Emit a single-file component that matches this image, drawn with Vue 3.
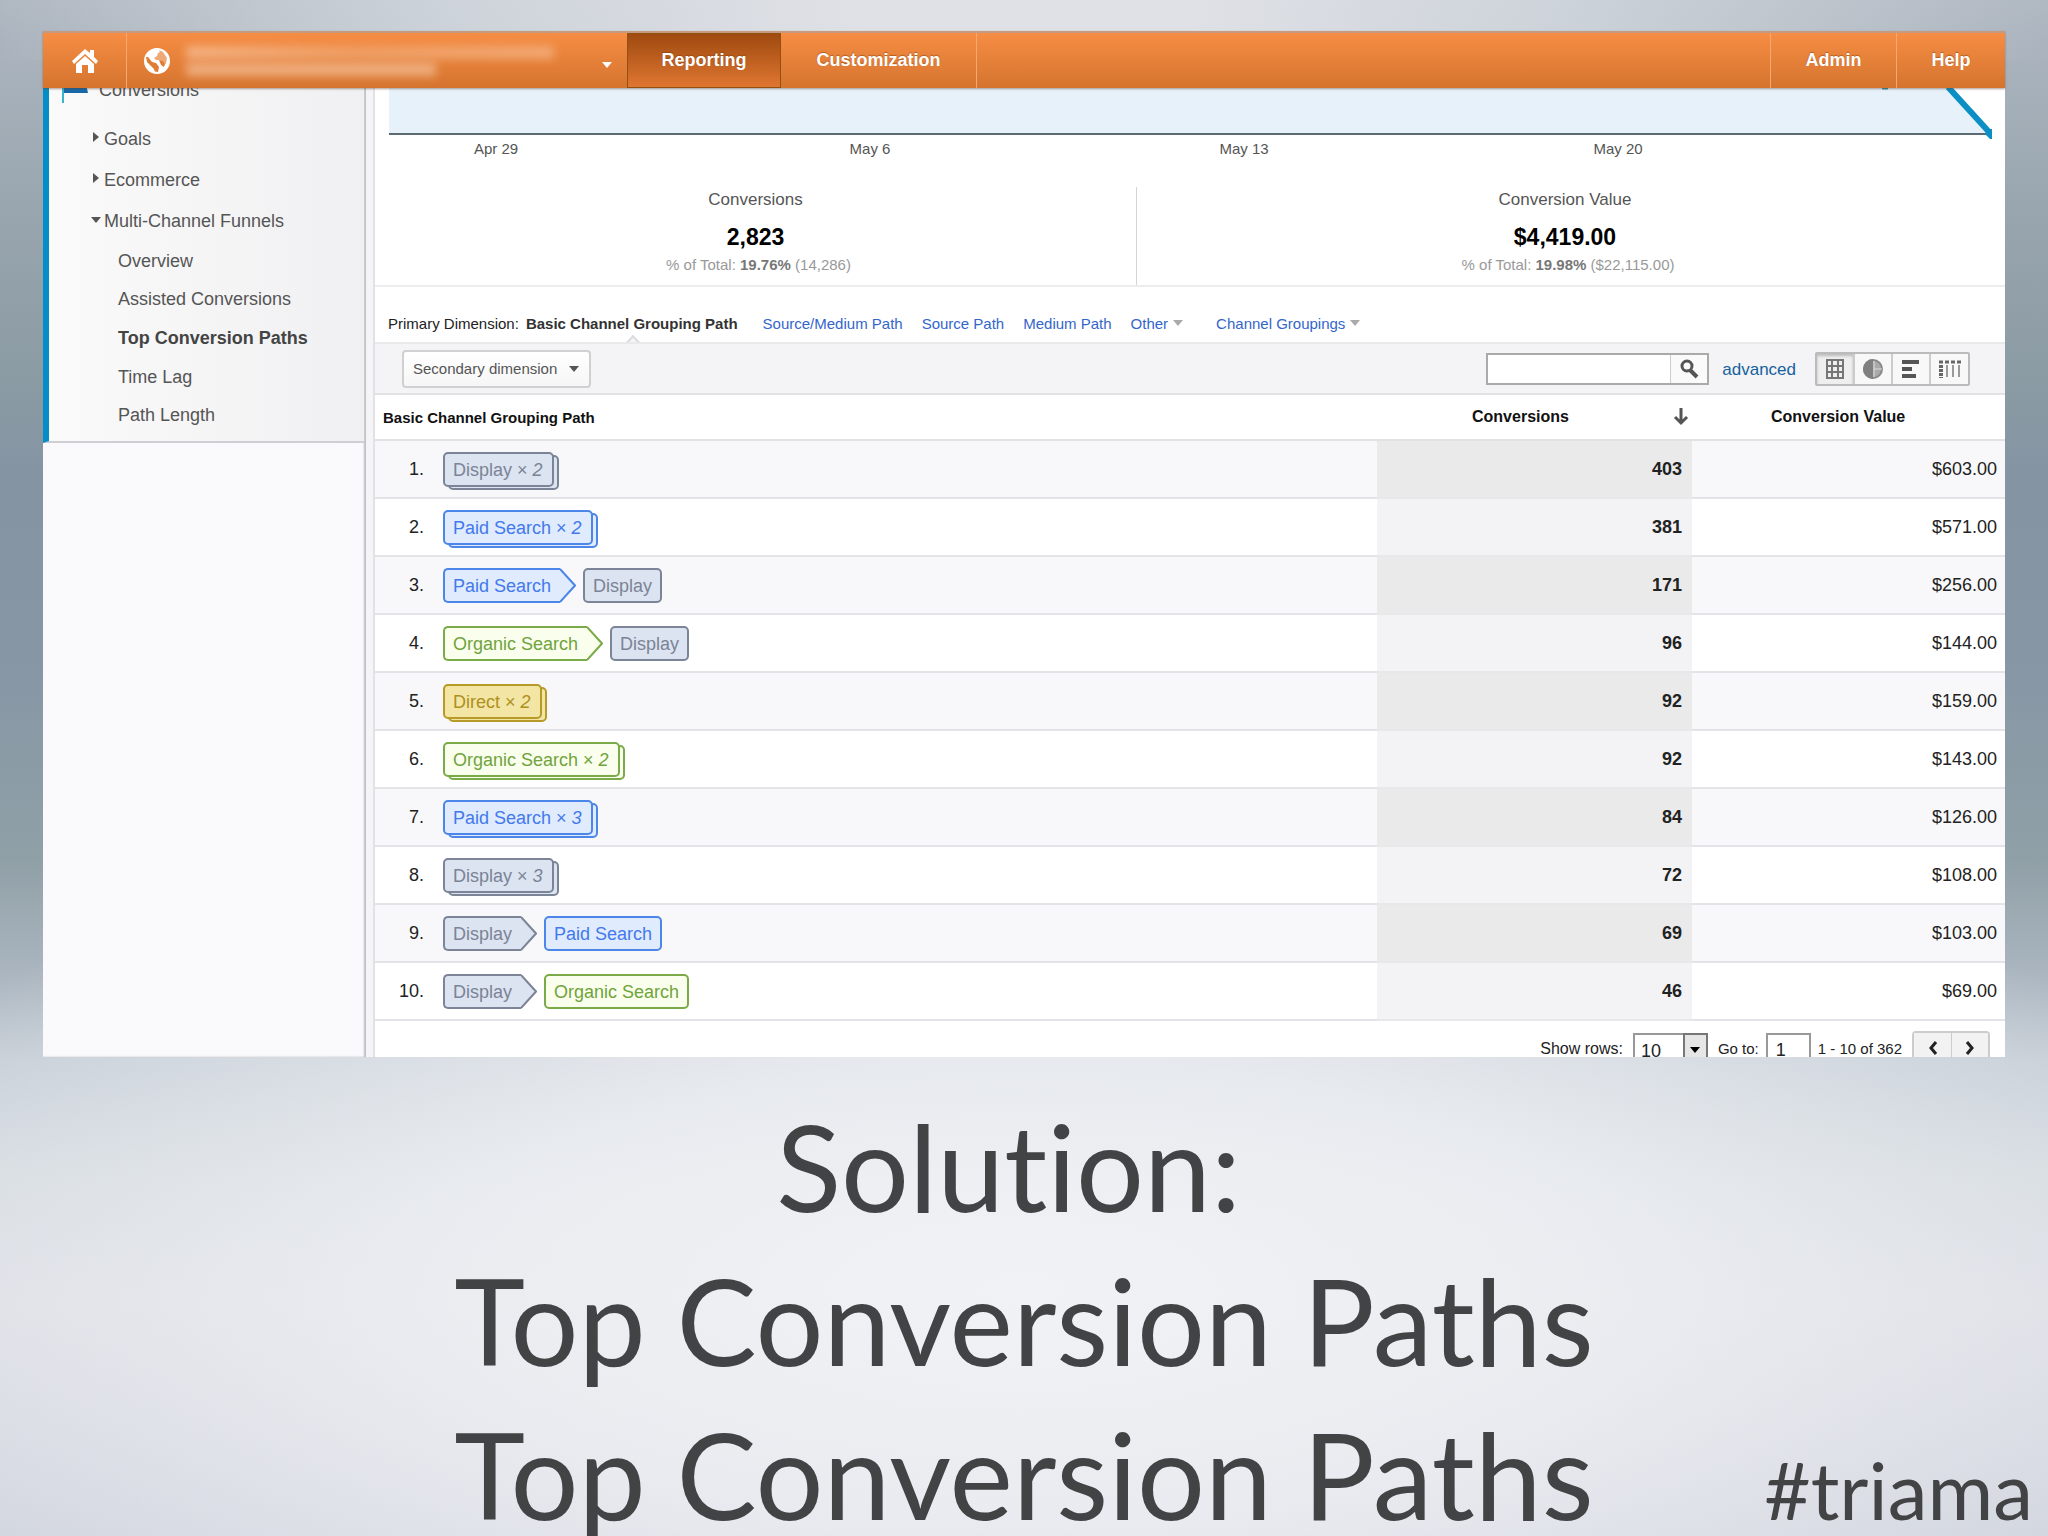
<script setup>
const subItems = ['Overview', 'Assisted Conversions', 'Top Conversion Paths', 'Time Lag', 'Path Length']
const dates = ['Apr 29', 'May 6', 'May 13', 'May 20']
const metrics = [
  { label: 'Conversions', value: '2,823', share: '19.76%', total: '(14,286)' },
  { label: 'Conversion Value', value: '$4,419.00', share: '19.98%', total: '($22,115.00)' }
]
const D = { name: 'Display', kind: 'display' }
const P = { name: 'Paid Search', kind: 'paid' }
const O = { name: 'Organic Search', kind: 'organic' }
const R = { name: 'Direct', kind: 'direct' }
const rows = [
  { path: [D], times: 2, count: 403, value: '$603.00' },
  { path: [P], times: 2, count: 381, value: '$571.00' },
  { path: [P, D], count: 171, value: '$256.00' },
  { path: [O, D], count: 96, value: '$144.00' },
  { path: [R], times: 2, count: 92, value: '$159.00' },
  { path: [O], times: 2, count: 92, value: '$143.00' },
  { path: [P], times: 3, count: 84, value: '$126.00' },
  { path: [D], times: 3, count: 72, value: '$108.00' },
  { path: [D, P], count: 69, value: '$103.00' },
  { path: [D, O], count: 46, value: '$69.00' }
]
</script>

<template>
  <main class="slide">
    <section class="panel">
      <header class="topbar">
        <a class="home" href="#" aria-label="Home">
          <svg width="26" height="24" viewBox="0 0 26 24" fill="#fff">
            <path d="M13 0L0 12l2 3L13 5l11 10 2-3-4-4V1h-4v3z" />
            <path d="M4 15l9-8 9 8v9h-6v-8h-6v8H4z" />
          </svg>
        </a>
        <button class="account" type="button" aria-label="Account">
          <svg width="26" height="26" viewBox="0 0 26 26">
            <circle cx="13" cy="13" r="13" fill="#fff" />
            <path d="M2 9l2 0 4 5 4 1 3 4-1 5c-3 0-4-1-4-3l-4-4-3-3z" fill="#e17c35" />
            <path d="M15 2l4 2 4 6-1 6-3-1-3-3h-4l-2-2 3-2 1-3 2-1z" fill="#efa878" />
            <path d="M15 12l4 1 2 3-1 3-3-2z" fill="#e17c35" />
          </svg>
          <span class="smudge"><i></i><i></i></span>
          <span class="tri white"></span>
        </button>
        <a class="tab active" href="#">Reporting</a>
        <a class="tab custom" href="#">Customization</a>
        <span class="spacer"></span>
        <a class="tab admin" href="#">Admin</a>
        <a class="tab help" href="#">Help</a>
      </header>

      <div class="body">
        <nav class="side">
          <div class="menu">
            <div class="section">
              <svg width="26" height="24" viewBox="0 0 26 24"><path d="M2 0h21l3 14H2z" fill="#1769aa" /><path d="M1 0v24" stroke="#35b5cf" stroke-width="2" /></svg>
              <span>Conversions</span>
            </div>
            <a class="group" href="#"><span class="right"></span>Goals</a>
            <a class="group" href="#"><span class="right"></span>Ecommerce</a>
            <a class="group" href="#"><span class="down"></span>Multi-Channel Funnels</a>
            <ul>
              <li v-for="s in subItems" :key="s"><a href="#" :class="{ current: s === 'Top Conversion Paths' }">{{ s }}</a></li>
            </ul>
          </div>
        </nav>

        <div class="content">
          <div class="chart">
            <svg class="plot" viewBox="0 0 1608 52" preserveAspectRatio="none">
              <path d="M0 0H1560L1601 46H0z" fill="#e7f1fa" />
              <path d="M0 46H1601" stroke="#5a6a70" stroke-width="2" />
              <path d="M1494 0h6" stroke="#2a93a8" stroke-width="3" />
              <path d="M1560 -1L1602 45" stroke="#0c8fc4" stroke-width="6" />
              <path d="M1599 41h5v10h-2l-5-5z" fill="#0c8fc4" />
            </svg>
            <div class="dates"><span v-for="d in dates" :key="d">{{ d }}</span></div>
          </div>

          <div class="metrics">
            <div v-for="m in metrics" :key="m.label" class="metric">
              <div class="label">{{ m.label }}</div>
              <div class="value">{{ m.value }}</div>
              <div class="total">% of Total: <b>{{ m.share }}</b> <span>{{ m.total }}</span></div>
            </div>
          </div>

          <div class="dimensions">
            <span class="primary">Primary Dimension:</span>
            <b class="chosen">Basic Channel Grouping Path</b>
            <a href="#">Source/Medium Path</a>
            <a href="#">Source Path</a>
            <a href="#">Medium Path</a>
            <a class="more" href="#">Other<span class="tri"></span></a>
            <a class="more" href="#">Channel Groupings<span class="tri"></span></a>
          </div>

          <div class="toolbar">
            <button class="secondary" type="button">Secondary dimension<span class="tri dark"></span></button>
            <span class="spacer"></span>
            <div class="search">
              <input type="text" aria-label="Search" />
              <button type="button" aria-label="Search">
                <svg width="20" height="20" viewBox="0 0 20 20" fill="none" stroke="#555"><circle cx="8" cy="7" r="5" stroke-width="3" /><path d="M11 11l7 7" stroke-width="4" /></svg>
              </button>
            </div>
            <a class="advanced" href="#">advanced</a>
            <div class="views">
              <button class="on" type="button" aria-label="Table">
                <svg width="18" height="20" viewBox="0 0 18 20" fill="none" stroke="#777" stroke-width="2"><path d="M1 1h16v18H1zM6 1v18M12 1v18M1 7h16M1 13h16" /></svg>
              </button>
              <button type="button" aria-label="Percentage">
                <svg width="20" height="20" viewBox="0 0 20 20"><circle cx="10" cy="10" r="9" fill="#aaa" stroke="#888" stroke-width="2" /><path d="M10 0A10 10 0 0 0 10 20z" fill="#808080" /><path d="M11 2v16M11 10h8" stroke="#ddd" stroke-width="1" /></svg>
              </button>
              <button type="button" aria-label="Performance">
                <svg width="20" height="20" viewBox="0 0 20 20" fill="#555"><path d="M1 1h17v4H1zM1 8h10v4H1zM1 15h14v4H1z" /></svg>
              </button>
              <button type="button" aria-label="Pivot">
                <svg width="22" height="20" viewBox="0 0 22 20" fill="none" stroke="#666"><path d="M0 3h22" stroke-width="3" stroke-dasharray="4 2" /><path d="M2 6v13" stroke-width="4" stroke-dasharray="3 1" /><path d="M8 6v12M14 6v12M20 6v12" stroke="#999" stroke-width="2" /></svg>
              </button>
            </div>
          </div>

          <table>
            <colgroup><col class="c-num" /><col /><col class="c-count" /><col class="c-value" /></colgroup>
            <thead>
              <tr>
                <th class="h-path" colspan="2">Basic Channel Grouping Path</th>
                <th><div class="sort">Conversions<svg width="16" height="18" viewBox="0 0 16 18" fill="none" stroke="#555" stroke-width="3"><path d="M8 0v15M2 9l6 6 6-6" /></svg></div></th>
                <th class="h-value">Conversion Value</th>
              </tr>
            </thead>
            <tbody>
              <tr v-for="(r, i) in rows" :key="i">
                <td class="num">{{ i + 1 }}.</td>
                <td>
                  <div class="path">
                    <span v-for="(p, j) in r.path" :key="j" class="tag" :class="[p.kind, { stack: r.times, arrow: j < r.path.length - 1 }]">
                      <span class="text">{{ p.name }}<template v-if="r.times"> × <em>{{ r.times }}</em></template></span>
                      <svg v-if="j < r.path.length - 1" class="tip" width="16" height="35" viewBox="0 0 16 35"><path d="M0 1L15 17.500L0 34" /></svg>
                    </span>
                  </div>
                </td>
                <td class="count">{{ r.count }}</td>
                <td class="money">{{ r.value }}</td>
              </tr>
            </tbody>
          </table>

          <footer class="pager">
            <label for="rows">Show rows:</label>
            <span class="pick"><select id="rows"><option>10</option></select><span class="knob"><span class="tri black"></span></span></span>
            <label class="small" for="page">Go to:</label>
            <input id="page" type="text" value="1" />
            <span class="small range">1 - 10 of 362</span>
            <div class="steps">
              <button type="button" aria-label="Previous"><svg width="10" height="14" viewBox="0 0 10 14" fill="none" stroke="#222" stroke-width="3"><path d="M8 1L3 7l5 6" /></svg></button>
              <button type="button" aria-label="Next"><svg width="10" height="14" viewBox="0 0 10 14" fill="none" stroke="#222" stroke-width="3"><path d="M2 1l5 6-5 6" /></svg></button>
            </div>
          </footer>
        </div>
      </div>
    </section>

    <h1>Solution:&nbsp;<br />Top Conversion Paths<br />Top Conversion Paths</h1>
    <p class="hashtag">#triama</p>
  </main>
</template>

<style>
body { background: #d9dce2; }
</style>

<style scoped>
* { box-sizing: border-box; }
.slide {
  position: relative;
  height: 100vh;
  overflow: hidden;
  padding: 31px 43px 0;
  font-family: "Liberation Sans", Arial, sans-serif;
  color: #222;
  background:
    radial-gradient(ellipse 62% 34% at 50% 84%, #f1f2f5 0%, rgba(238, 240, 244, 0.8) 45%, rgba(226, 228, 234, 0) 100%),
    linear-gradient(90deg, rgba(222, 225, 231, 0) 0%, rgba(218, 223, 228, 0.7) 22%, #dfe1e6 42%, #dfe1e6 58%, rgba(218, 223, 228, 0.7) 76%, rgba(222, 225, 231, 0) 100%) 0 0 / 100% 60px no-repeat,
    linear-gradient(180deg, #b0b8c2 0%, #98a5ae 14%, #8c9ca4 24%, #8494a3 31%, #8696a5 43%, #90a0a7 56%, #a9b4be 63%, #c6ced6 69%, #d5dbe0 77%, #dcdee5 85%, #d0d4dd 100%);
}
a { color: inherit; text-decoration: none; }
button, input, select { font: inherit; color: inherit; margin: 0; padding: 0; border-radius: 0; }
.spacer { flex: 1; }
.tri { width: 0; height: 0; border: 5px solid transparent; border-top: 6px solid #aaa; border-bottom: 0; }
.tri.white { border-top-color: #fff; }
.tri.dark { border-top-color: #555; }
.tri.black { border-top-color: #000; }

.topbar {
  position: relative;
  z-index: 1;
  display: flex;
  height: 57px;
  border-top: 2px solid #c49a80;
  background: linear-gradient(#f68d44, #d5742e);
  box-shadow: 0 1px 2px rgba(90, 60, 40, 0.5);
  color: #fff;
}
.home { width: 84px; display: flex; align-items: center; justify-content: center; border-right: 1px solid #f5a871; }
.account { width: 500px; display: flex; align-items: center; padding: 0 15px 0 17px; border: 0; background: none; }
.smudge { flex: 1; display: flex; flex-direction: column; gap: 4px; margin-left: 16px; }
.smudge i { width: 368px; height: 13px; background: linear-gradient(90deg, rgba(255, 224, 200, 0.5), rgba(255, 224, 200, 0.3) 45%, rgba(255, 224, 200, 0.4)); filter: blur(5px); }
.smudge i + i { width: 250px; background: rgba(255, 224, 200, 0.5); }
.account .tri { margin-top: 8px; }
.tab { display: flex; align-items: center; justify-content: center; font-size: 18px; font-weight: bold; text-shadow: 0 -1px 1px rgba(120, 60, 10, 0.5); }
.active { width: 154px; border: 1px solid #93500f; background: linear-gradient(#9f4a10, #df7631); }
.custom { width: 196px; border-right: 1px solid #f5a871; }
.admin { width: 126px; border-left: 1px solid #f5a871; }
.help { width: 109px; border-left: 1px solid #f5a871; }

.body { display: flex; background: #fff; }
.side {
  width: 332px;
  flex: none;
  overflow: hidden;
  background: #fafafc;
  border-right: 2px solid #e3e1e5;
  padding-right: 9px;
  box-shadow: inset -7px 0 #f5f4f7, inset -9px 0 2px #bdbdc2;
}
.menu {
  margin-top: -18px;
  border-left: 6px solid #058dc7;
  border-bottom: 2px solid #cfcfd3;
  background: linear-gradient(90deg, #fafafa, #f0f0f2);
  padding-bottom: 6px;
  font-size: 18px;
  color: #555;
}
.section { display: flex; align-items: center; gap: 11px; height: 49px; padding: 0 0 8px 13px; }
.group { display: flex; align-items: center; height: 41px; padding-left: 42px; }
.group span { width: 13px; }
.right::before, .down::before { content: ""; display: block; width: 0; height: 0; border: 5px solid transparent; }
.right::before { border-left: 6px solid #555; border-right: 0; margin: -6px 0 0 2px; }
.down::before { border-top: 6px solid #555; border-bottom: 0; margin-top: -4px; }
.menu ul { display: grid; grid-auto-rows: 1fr; align-items: center; height: 193px; margin: 0; padding: 0 0 0 69px; list-style: none; }
.current { font-weight: bold; color: #444; }

.content { flex: 1; min-width: 0; }
.chart { padding: 0 9px 0 14px; }
.plot { display: block; width: 100%; height: 52px; }
.dates { display: grid; grid-template-columns: repeat(4, 374px); margin-left: -80px; font-size: 15px; line-height: 18px; text-align: center; color: #555; }
.metrics { display: flex; margin-top: 29px; border-bottom: 2px solid #ececee; text-align: center; }
.metric { width: 762px; height: 98px; padding-top: 2px; border-right: 1px solid #d5d5d8; }
.metric + .metric { flex: 1; border: 0; padding-right: 12px; }
.label { font-size: 17px; line-height: 22px; color: #555; }
.value { font-size: 23px; line-height: 28px; margin-top: 12px; font-weight: bold; color: #000; }
.total { font-size: 15px; line-height: 20px; margin-top: 4px; padding-left: 6px; color: #999; }
.total b { color: #777; }

.dimensions { display: flex; align-items: center; height: 55px; padding: 17px 0 0 13px; font-size: 15px; gap: 19px; color: #3366cc; white-space: nowrap; }
.primary { color: #222; margin-right: -12px; }
.chosen { position: relative; margin-right: 6px; color: #333; }
.chosen::after { content: ""; position: absolute; left: 50%; top: 23px; width: 12px; height: 12px; margin-left: -6px; background: #f5f4f6; border: 2px solid #dcdce0; border-right: 0; border-bottom: 0; transform: rotate(45deg); }
.more { display: flex; align-items: center; gap: 5px; }
.more + .more { margin-left: 14px; }

.toolbar { position: relative; display: flex; align-items: center; height: 53px; padding: 0 35px 0 27px; background: #f4f3f5; border-top: 2px solid #e9e9ec; border-bottom: 2px solid #e2e2e5; }
.secondary { display: flex; align-items: center; justify-content: space-between; width: 189px; height: 38px; padding: 0 10px 0 9px; border: 2px solid #d0d0d3; border-radius: 4px; background: linear-gradient(#fff, #f6f6f6); font-size: 15px; color: #555; }
.search { display: flex; height: 32px; border: 2px solid #aaa; background: #fff; }
.search input { width: 182px; border: 0; }
.search button { width: 37px; border: 0; border-left: 1px solid #ccc; background: #fafafa; display: flex; align-items: center; justify-content: center; }
.advanced { margin: 2px 19px 0 13px; font-size: 17px; color: #15629e; }
.views { display: flex; height: 34px; border: 2px solid #bbb; border-radius: 2px; }
.views button { width: 38px; border: 0; border-right: 2px solid #ccc; background: #f8f8f8; display: flex; align-items: center; justify-content: center; }
.views button:last-child { border-right: 0; width: 37px; }
.views .on { background: #efefef; box-shadow: inset 0 2px 3px #bbb; }

table { width: 100%; table-layout: fixed; border-collapse: separate; border-spacing: 0; }
.c-num { width: 68px; }
.c-count { width: 315px; }
.c-value { width: 313px; }
th { height: 46px; padding: 0; border-bottom: 2px solid #e2e2e5; font-size: 16px; text-align: left; color: #111; }
.h-path { padding-left: 8px; font-size: 15px; }
.h-value { padding-left: 79px; }
.sort { display: flex; justify-content: space-between; align-items: center; padding: 0 3px 0 95px; }
td { height: 58px; padding: 0; border-bottom: 2px solid #e4e4e8; font-size: 18px; vertical-align: middle; }
tbody tr:nth-child(odd) td { background: #f8f8fa; }
tbody tr .count, tbody tr:nth-child(even) .count { background: #f3f3f5; font-weight: bold; border-bottom-color: #e8e8ea; }
tbody tr:nth-child(odd) .count { background: #eaeaeb; }
.num { text-align: right; padding-right: 19px; }
.count { text-align: right; padding-right: 10px; }
.money { text-align: right; padding-right: 8px; }

.path { display: flex; gap: 7px; }
.tag { position: relative; height: 35px; }
.text { display: block; position: relative; height: 35px; line-height: 32px; padding: 0 8px; border: 2px solid var(--line); border-radius: 5px; background: var(--fill); color: var(--ink); white-space: pre; }
.stack .text { padding-right: 9px; }
.stack::before { content: ""; position: absolute; left: 5px; top: 3px; right: -5px; bottom: -3px; border: 2px solid var(--line); border-radius: 5px; background: var(--fill); }
.arrow { display: flex; }
.arrow .text { border-right: 0; border-radius: 5px 0 0 5px; padding-right: 9px; }
.tip { fill: var(--fill); stroke: var(--line); stroke-width: 2; }
.display { --line: #7c8598; --fill: #dce3f1; --ink: #7b8396; }
.paid { --line: #4b86e8; --fill: #e0ebfd; --ink: #4379ec; }
.organic { --line: #7bab48; --fill: #f9ffec; --ink: #70a33c; }
.direct { --line: #b89a28; --fill: #f3e5a4; --ink: #ad901e; }

.pager { display: flex; justify-content: flex-end; height: 36px; padding: 12px 15px 0 0; overflow: hidden; font-size: 16px; line-height: 32px; }
.pager .small { font-size: 15px; }
.pick { position: relative; margin: 0 10px 0 10px; }
.pick select { appearance: none; width: 75px; height: 34px; padding-left: 6px; border: 2px solid #999; background: #fff; font-size: 18px; }
.knob { position: absolute; right: 0; top: 0; display: flex; align-items: center; justify-content: center; width: 25px; height: 34px; border: 2px solid #777; background: #e6e6e6; pointer-events: none; }
.pager input { width: 45px; height: 34px; margin: 0 7px; padding-left: 8px; border: 2px solid #999; font-size: 18px; }
.steps { display: flex; height: 34px; margin: -2px 0 0 10px; border: 2px solid #ccc; border-radius: 4px; }
.steps button { display: flex; align-items: center; justify-content: center; width: 37px; border: 0; background: #f2f2f2; }
.steps button + button { border-left: 1px solid #ccc; }

h1 { margin: 32px 0 0; font-family: Lato, "Open Sans", sans-serif; font-size: 120px; font-weight: 400; font-variant-ligatures: none; line-height: 154px; text-align: center; color: #424344; }
.hashtag { position: absolute; right: 15px; bottom: 7px; margin: 0; font-family: Lato, "Open Sans", sans-serif; font-size: 80px; line-height: 80px; color: #424344; }
</style>
